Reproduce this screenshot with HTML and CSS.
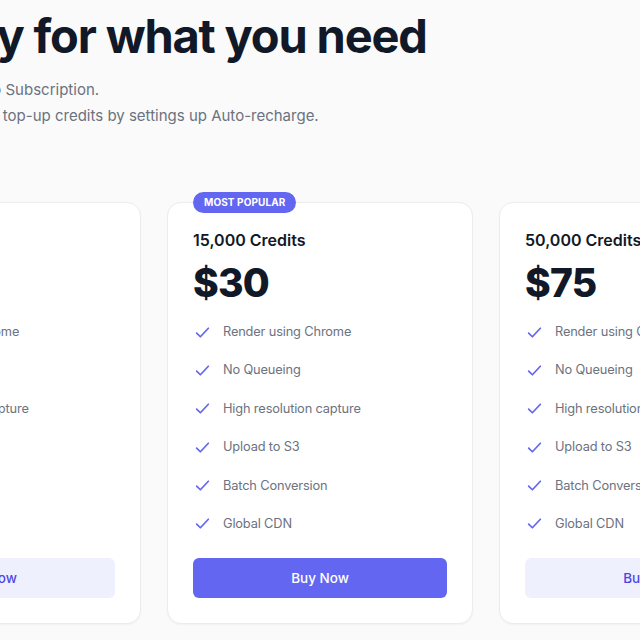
FILE: index.html
```html
<!DOCTYPE html>
<html lang="en">
<head>
    <meta charset="UTF-8">
    <meta name="viewport" content="width=device-width, initial-scale=1.0">
    <title>Pricing</title>
    <link rel="stylesheet" href="styles.css">
</head>
<body>

    <header class="pricing-header">
        <h1>Only pay for what you need</h1>
        <p>Credits never expire. No Subscription.</p>
        <p>You could automatically top-up credits by settings up Auto-recharge.</p>
    </header>

    <section class="plans">
        <div class="plan">
            <h3 class="plan-name">5,000 Credits</h3>
            <div class="plan-price">$15</div>
            <ul class="features">
                <li><svg class="check" viewBox="0 0 16 16"><path d="M2.5 8.5l3.5 3.5 7.5-8"/></svg>Render using Chrome</li>
                <li><svg class="check" viewBox="0 0 16 16"><path d="M2.5 8.5l3.5 3.5 7.5-8"/></svg>No Queueing</li>
                <li><svg class="check" viewBox="0 0 16 16"><path d="M2.5 8.5l3.5 3.5 7.5-8"/></svg>High resolution capture</li>
                <li><svg class="check" viewBox="0 0 16 16"><path d="M2.5 8.5l3.5 3.5 7.5-8"/></svg>Upload to S3</li>
                <li><svg class="check" viewBox="0 0 16 16"><path d="M2.5 8.5l3.5 3.5 7.5-8"/></svg>Batch Conversion</li>
                <li><svg class="check" viewBox="0 0 16 16"><path d="M2.5 8.5l3.5 3.5 7.5-8"/></svg>Global CDN</li>
            </ul>
            <button class="buy">Buy Now</button>
        </div>

        <div class="plan popular">
            <span class="badge">Most popular</span>
            <h3 class="plan-name">15,000 Credits</h3>
            <div class="plan-price">$30</div>
            <ul class="features">
                <li><svg class="check" viewBox="0 0 16 16"><path d="M2.5 8.5l3.5 3.5 7.5-8"/></svg>Render using Chrome</li>
                <li><svg class="check" viewBox="0 0 16 16"><path d="M2.5 8.5l3.5 3.5 7.5-8"/></svg>No Queueing</li>
                <li><svg class="check" viewBox="0 0 16 16"><path d="M2.5 8.5l3.5 3.5 7.5-8"/></svg>High resolution capture</li>
                <li><svg class="check" viewBox="0 0 16 16"><path d="M2.5 8.5l3.5 3.5 7.5-8"/></svg>Upload to S3</li>
                <li><svg class="check" viewBox="0 0 16 16"><path d="M2.5 8.5l3.5 3.5 7.5-8"/></svg>Batch Conversion</li>
                <li><svg class="check" viewBox="0 0 16 16"><path d="M2.5 8.5l3.5 3.5 7.5-8"/></svg>Global CDN</li>
            </ul>
            <button class="buy">Buy Now</button>
        </div>

        <div class="plan">
            <h3 class="plan-name">50,000 Credits</h3>
            <div class="plan-price">$75</div>
            <ul class="features">
                <li><svg class="check" viewBox="0 0 16 16"><path d="M2.5 8.5l3.5 3.5 7.5-8"/></svg>Render using Chrome</li>
                <li><svg class="check" viewBox="0 0 16 16"><path d="M2.5 8.5l3.5 3.5 7.5-8"/></svg>No Queueing</li>
                <li><svg class="check" viewBox="0 0 16 16"><path d="M2.5 8.5l3.5 3.5 7.5-8"/></svg>High resolution capture</li>
                <li><svg class="check" viewBox="0 0 16 16"><path d="M2.5 8.5l3.5 3.5 7.5-8"/></svg>Upload to S3</li>
                <li><svg class="check" viewBox="0 0 16 16"><path d="M2.5 8.5l3.5 3.5 7.5-8"/></svg>Batch Conversion</li>
                <li><svg class="check" viewBox="0 0 16 16"><path d="M2.5 8.5l3.5 3.5 7.5-8"/></svg>Global CDN</li>
            </ul>
            <button class="buy">Buy Now</button>
        </div>
    </section>

</body>
</html>
```

FILE: styles.css
```css
body {
    font-family: 'Inter', 'Noto Sans', sans-serif;
    background-color: #fafafa;
    color: #111827;
    margin: 0;
    display: flex;
    flex-direction: column;
    align-items: center;
    overflow: hidden;
    height: 640px;
}

.pricing-header {
    width: 980px;
    flex-shrink: 0;
    padding-top: 7px;
}

.pricing-header h1 {
    font-size: 47px;
    line-height: 58px;
    font-weight: 700;
    letter-spacing: -0.025em;
    color: #111827;
    margin: 0 0 12px;
}

.pricing-header p {
    font-size: 15px;
    line-height: 26px;
    color: #6b7280;
    margin: 0;
}

.plans {
    width: 970px;
    flex-shrink: 0;
    display: grid;
    grid-template-columns: repeat(3, 1fr);
    gap: 26px;
    margin-top: 73px;
}

.plan {
    position: relative;
    background-color: #ffffff;
    border: 1px solid #ececef;
    border-radius: 14px;
    box-shadow: 0 1px 2px rgba(0, 0, 0, 0.04);
    padding: 25px;
    display: flex;
    flex-direction: column;
}

.badge {
    position: absolute;
    top: -11px;
    left: 25px;
    background-color: #6366f1;
    color: #ffffff;
    font-size: 10px;
    font-weight: 700;
    letter-spacing: 0.01em;
    text-transform: uppercase;
    line-height: 21px;
    padding: 0 11px;
    border-radius: 11px;
}

.plan-name {
    font-size: 16px;
    line-height: 24px;
    font-weight: 600;
    margin: 0;
}

.plan-price {
    font-size: 39px;
    line-height: 40px;
    font-weight: 800;
    letter-spacing: -0.02em;
    margin-top: 11px;
}

.features {
    list-style: none;
    padding: 0;
    margin: 19px 0 0;
    display: flex;
    flex-direction: column;
    gap: 18.4px;
}

.features li {
    display: flex;
    align-items: center;
    gap: 12px;
    font-size: 12.8px;
    letter-spacing: -0.15px;
    line-height: 20px;
    color: #6b7280;
}

.check {
    width: 17px;
    height: 17px;
    margin-left: 1px;
    fill: none;
    stroke: #6366f1;
    stroke-width: 1.6;
    stroke-linecap: round;
    stroke-linejoin: round;
}

.buy {
    margin-top: 24px;
    height: 40px;
    border: none;
    border-radius: 6px;
    font-family: inherit;
    font-size: 13.5px;
    font-weight: 500;
    background-color: #eef0fe;
    color: #4f46e5;
    cursor: pointer;
}

.popular .buy {
    background-color: #6366f1;
    color: #ffffff;
}
```
